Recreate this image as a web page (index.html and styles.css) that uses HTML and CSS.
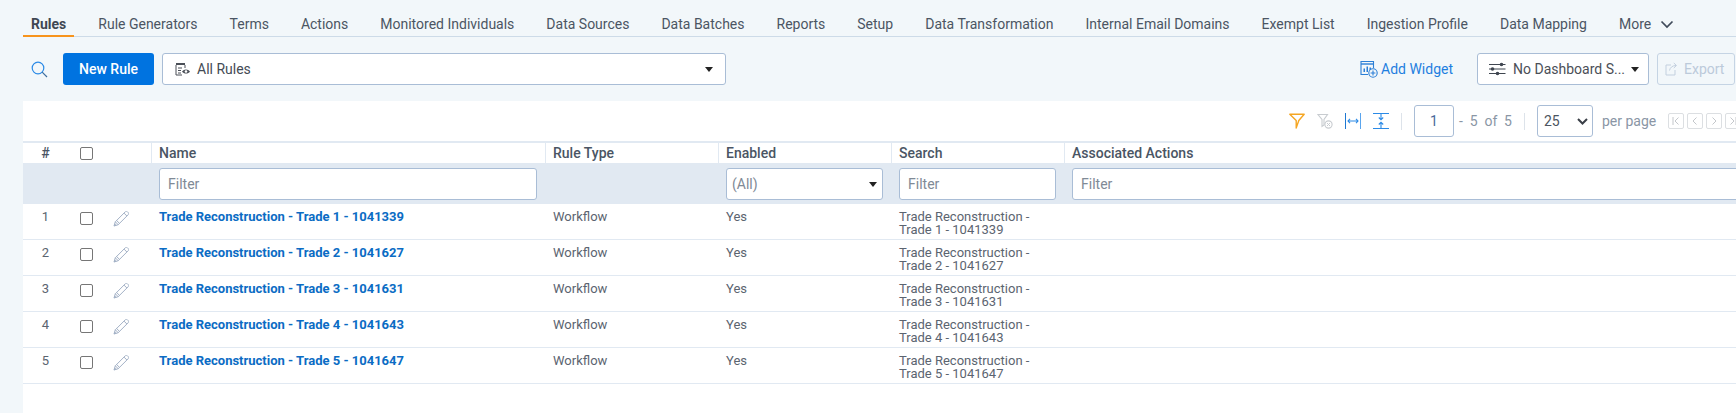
FILE: index.html
```html
<!DOCTYPE html>
<html lang="en">
<head>
  <meta charset="UTF-8" />
  <title>Rules</title>
  <link rel="stylesheet" href="styles.css">
</head>
<body>
  <svg class="sprite" aria-hidden="true">
    <symbol id="pencil" viewBox="0 0 16 16">
      <path d="M12.4.7C13 .2 13.7.2 14.3.7L15.3 1.7C15.8 2.3 15.8 3 15.3 3.6L5.2 13.7 1 15 2.3 10.8Z" fill="none" stroke="#a3b1c6" stroke-width="1"/>
      <path d="M2.3 10.8 5.2 13.7M11 2.1 13.9 5M3.6 9.5 6.5 12.4" fill="none" stroke="#a3b1c6" stroke-width="1"/>
      <path d="M.8 15.2 1.7 12.4 3.6 14.3Z" fill="#a3b1c6"/>
    </symbol>
  </svg>

  <nav class="tabs">
    <a class="tab active">Rules</a>
    <a class="tab">Rule Generators</a>
    <a class="tab">Terms</a>
    <a class="tab">Actions</a>
    <a class="tab">Monitored Individuals</a>
    <a class="tab">Data Sources</a>
    <a class="tab">Data Batches</a>
    <a class="tab">Reports</a>
    <a class="tab">Setup</a>
    <a class="tab">Data Transformation</a>
    <a class="tab">Internal Email Domains</a>
    <a class="tab">Exempt List</a>
    <a class="tab">Ingestion Profile</a>
    <a class="tab">Data Mapping</a>
    <a class="tab">More
      <svg class="more-chevron" width="14" height="9" viewBox="0 0 14 9"><path d="M1.5 1.5 7 7 12.5 1.5" fill="none" stroke="#3f4a5a" stroke-width="1.7"/></svg>
    </a>
  </nav>

  <div class="toolbar">
    <svg class="search-icon" width="17" height="17" viewBox="0 0 17 17"><circle cx="7" cy="7" r="5.8" fill="none" stroke="#2b8ae6" stroke-width="1.2"/><path d="M11.2 11.2 16 16" stroke="#3f6f9f" stroke-width="1.2"/></svg>
    <button class="btn-primary">New Rule</button>
    <div class="view-select">
      <svg width="16" height="14" viewBox="0 0 16 14"><path d="M1 1H10V3H1Z" fill="#4a4f57"/><path d="M1 3V13H7M10 3V6M3 6H7M3 8.5H6M3 11H6" fill="none" stroke="#4a4f57" stroke-width="1"/><path d="M7 9.5C9 6.8 13 6.8 15 9.5 13 12.2 9 12.2 7 9.5Z" fill="#4a4f57"/><circle cx="11" cy="9.5" r="1.3" fill="#fff"/></svg>
      <span class="view-name">All Rules</span>
      <span class="caret"></span>
    </div>
    <a class="add-widget">
      <svg width="18" height="18" viewBox="0 0 18 18"><path d="M13.5 8V1.5H1V14.5H8" fill="none" stroke="#2b7fd6" stroke-width="1.1"/><path d="M1 4H13.5" stroke="#2b7fd6" stroke-width="1.4"/><path d="M3.5 12V8.5H5V12ZM6.5 12V6.5H8V12ZM9.5 10V7.5H11V10Z" fill="#2b7fd6"/><circle cx="13" cy="13" r="4.2" fill="#f2f7fa" stroke="#2b7fd6" stroke-width="1.1"/><path d="M13 10.6V15.4M10.6 13H15.4" stroke="#2b7fd6" stroke-width="1.1"/></svg>
      Add Widget
    </a>
    <div class="dash-select">
      <svg width="17" height="14" viewBox="0 0 17 14"><path d="M0 2.5H16.5M0 7H16.5M0 11.5H16.5" stroke="#3f4650" stroke-width="1"/><circle cx="12.5" cy="2.5" r="1.8" fill="#3f4650"/><circle cx="3.5" cy="7" r="1.8" fill="#3f4650"/><circle cx="8.5" cy="11.5" r="1.8" fill="#3f4650"/></svg>
      <span class="dash-name">No Dashboard S...</span>
      <span class="caret"></span>
    </div>
    <button class="btn-export">
      <svg width="13" height="14" viewBox="0 0 13 14"><path d="M6 3H1V13H10V8" fill="none" stroke="#c3d0df" stroke-width="1"/><path d="M4.5 8.5C5 5.5 7.5 3.5 11 3.5M8.8 1 11.5 3.5 8.8 6" fill="none" stroke="#c3d0df" stroke-width="1"/></svg>
      Export
    </button>
  </div>

  <main class="panel">
    <div class="grid-tools">
      <svg class="tool" width="16" height="16" viewBox="0 0 16 16"><path d="M.8 1.2H15.2L9.8 7.5 7.2 15V7.5Z" fill="none" stroke="#f5a623" stroke-width="1.4" stroke-linejoin="round"/></svg>
      <svg class="tool" width="16" height="16" viewBox="0 0 16 16"><path d="M1 1.5H10.5L7 6.5V12L5 13.5V6.5Z" fill="none" stroke="#c8ccd0" stroke-width="1.1"/><circle cx="11.5" cy="11.5" r="3.6" fill="none" stroke="#c8ccd0" stroke-width="1.1"/><path d="M10 10 13 13M13 10 10 13" stroke="#c8ccd0" stroke-width="1"/></svg>
      <svg class="tool" width="16" height="16" viewBox="0 0 16 16"><path d="M.5 0V16" stroke="#1e78d2"/><path d="M15.5 0V16" stroke="#5aa5ee"/><path d="M3 8H13M5 5.8 3 8 5 10.2M11 5.8 13 8 11 10.2" fill="none" stroke="#2b8ae6" stroke-width="1.1"/></svg>
      <svg class="tool" width="16" height="16" viewBox="0 0 16 16"><path d="M0 .5H16M0 15.5H16" stroke="#2b8ae6"/><path d="M8 1V6.5M5.8 4.5 8 6.8 10.2 4.5M8 9.5V15M5.8 11.5 8 9.2 10.2 11.5" fill="none" stroke="#2b8ae6" stroke-width="1.1"/></svg>
      <span class="divider"></span>
      <input class="page-input" value="1" />
      <span class="page-range"><span>-</span><span>5</span><span>of</span><span>5</span></span>
      <span class="divider"></span>
      <div class="size-select">25
        <svg width="11" height="7" viewBox="0 0 11 7"><path d="M1 1 5.5 5.5 10 1" fill="none" stroke="#3a3f47" stroke-width="2"/></svg>
      </div>
      <span class="per-page">per page</span>
      <div class="pager">
        <span class="page-btn"><svg width="8" height="8" viewBox="0 0 8 8"><path d="M1 0V8M6.5 .5 3 4 6.5 7.5" fill="none" stroke="#c4c7cb"/></svg></span>
        <span class="page-btn"><svg width="8" height="8" viewBox="0 0 8 8"><path d="M5.5 .5 2 4 5.5 7.5" fill="none" stroke="#c4c7cb"/></svg></span>
        <span class="page-btn"><svg width="8" height="8" viewBox="0 0 8 8"><path d="M2.5 .5 6 4 2.5 7.5" fill="none" stroke="#c4c7cb"/></svg></span>
        <span class="page-btn"><svg width="8" height="8" viewBox="0 0 8 8"><path d="M7 0V8M1.5 .5 5 4 1.5 7.5" fill="none" stroke="#c4c7cb"/></svg></span>
      </div>
    </div>

    <table class="rules">
      <colgroup>
        <col class="c-num"><col class="c-check"><col class="c-edit"><col class="c-name"><col class="c-mid"><col class="c-mid"><col class="c-mid"><col class="c-actions">
      </colgroup>
      <thead>
        <tr class="head-row">
          <th class="num">#</th>
          <th class="check"><span class="box"></span></th>
          <th></th>
          <th class="sep">Name</th>
          <th class="sep">Rule Type</th>
          <th class="sep">Enabled</th>
          <th class="sep">Search</th>
          <th class="sep">Associated Actions</th>
        </tr>
        <tr class="filter-row">
          <td></td><td></td><td></td>
          <td><input class="filter" placeholder="Filter" /></td>
          <td></td>
          <td><div class="filter filter-select">(All)<span class="caret"></span></div></td>
          <td><input class="filter" placeholder="Filter" /></td>
          <td><input class="filter" placeholder="Filter" /></td>
        </tr>
      </thead>
      <tbody>
        <tr>
          <td class="num">1</td><td class="check"><span class="box"></span></td><td class="edit"><svg width="16" height="16"><use href="#pencil"/></svg></td>
          <td><a class="rule-link">Trade Reconstruction - Trade 1 - 1041339</a></td><td>Workflow</td><td>Yes</td>
          <td>Trade Reconstruction -<br>Trade 1 - 1041339</td><td></td>
        </tr>
        <tr>
          <td class="num">2</td><td class="check"><span class="box"></span></td><td class="edit"><svg width="16" height="16"><use href="#pencil"/></svg></td>
          <td><a class="rule-link">Trade Reconstruction - Trade 2 - 1041627</a></td><td>Workflow</td><td>Yes</td>
          <td>Trade Reconstruction -<br>Trade 2 - 1041627</td><td></td>
        </tr>
        <tr>
          <td class="num">3</td><td class="check"><span class="box"></span></td><td class="edit"><svg width="16" height="16"><use href="#pencil"/></svg></td>
          <td><a class="rule-link">Trade Reconstruction - Trade 3 - 1041631</a></td><td>Workflow</td><td>Yes</td>
          <td>Trade Reconstruction -<br>Trade 3 - 1041631</td><td></td>
        </tr>
        <tr>
          <td class="num">4</td><td class="check"><span class="box"></span></td><td class="edit"><svg width="16" height="16"><use href="#pencil"/></svg></td>
          <td><a class="rule-link">Trade Reconstruction - Trade 4 - 1041643</a></td><td>Workflow</td><td>Yes</td>
          <td>Trade Reconstruction -<br>Trade 4 - 1041643</td><td></td>
        </tr>
        <tr>
          <td class="num">5</td><td class="check"><span class="box"></span></td><td class="edit"><svg width="16" height="16"><use href="#pencil"/></svg></td>
          <td><a class="rule-link">Trade Reconstruction - Trade 5 - 1041647</a></td><td>Workflow</td><td>Yes</td>
          <td>Trade Reconstruction -<br>Trade 5 - 1041647</td><td></td>
        </tr>
      </tbody>
    </table>
  </main>
</body>
</html>
```

FILE: styles.css
```css
:root {
  --background: #f2f7fa;
  --line: #e1e9f2;
  --field-border: #a9bdd6;
  --text: #4c5561;
  --blue: #0073e0;
  --link: #0b6cc4;
}

* {
  box-sizing: border-box;
}

html, body {
  height: 100%;
}

body {
  margin: 0;
  padding-left: 23px;
  overflow: hidden;
  display: flex;
  flex-direction: column;
  background-color: var(--background);
  color: var(--text);
  font-family: Roboto, sans-serif;
  font-size: 14px;
}

.sprite {
  display: none;
}

svg {
  flex: none;
}

/* tabs */
.tabs {
  display: flex;
  gap: 16px;
  height: 37px;
  padding-top: 15px;
  border-bottom: 1px solid #cddbe8;
  white-space: nowrap;
}

.tab {
  display: flex;
  align-items: flex-start;
  padding: 0 8px;
  height: 22px;
  line-height: 18px;
  color: #4b5563;
}

.tab.active {
  font-weight: 700;
  color: #3f4752;
  border-bottom: 2px solid #f7941d;
}

.more-chevron {
  margin: 5px 0 0 9px;
}

/* toolbar */
.toolbar {
  display: flex;
  align-items: center;
  height: 64px;
  flex: none;
}

.search-icon {
  margin: 0 15px 0 8px;
}

.btn-primary {
  width: 91px;
  height: 32px;
  margin-right: 8px;
  border: none;
  border-radius: 3px;
  background-color: var(--blue);
  color: #fff;
  font: 500 14px Roboto, sans-serif;
}

.view-select, .dash-select {
  display: flex;
  align-items: center;
  height: 32px;
  border: 1px solid var(--field-border);
  border-radius: 3px;
  background-color: #fff;
  color: #444b55;
}

.view-select {
  width: 564px;
  padding: 0 12px;
}

.view-name {
  margin-left: 6px;
}

.view-select .caret {
  margin-left: auto;
}

.caret {
  width: 0;
  height: 0;
  border-left: 4px solid transparent;
  border-right: 4px solid transparent;
  border-top: 5px solid #222;
}

.add-widget {
  display: flex;
  align-items: center;
  gap: 3px;
  margin-left: auto;
  margin-right: 24px;
  color: #1f7fe0;
}

.dash-select {
  width: 172px;
  padding: 0 11px;
  margin-right: 8px;
  white-space: nowrap;
}

.dash-name {
  margin: 0 6px 0 7px;
  color: #4b4f57;
}

.btn-export {
  display: flex;
  align-items: center;
  gap: 6px;
  width: 78px;
  height: 32px;
  margin-right: 1px;
  padding: 0 7px;
  border: 1px solid #c5d4e4;
  border-radius: 3px;
  background: transparent;
  color: #bccada;
  font: 14px Roboto, sans-serif;
}

/* white area */
.panel {
  flex: 1;
  background-color: #fff;
}

.grid-tools {
  display: flex;
  align-items: center;
  justify-content: flex-end;
  height: 40px;
  margin-right: -5px;
  color: #8a96a5;
}

.tool {
  margin-right: 12px;
}

.divider {
  width: 1px;
  height: 17px;
  margin-right: 12px;
  background-color: #dde3ea;
}

.page-input {
  width: 40px;
  height: 32px;
  border: 1px solid var(--field-border);
  border-radius: 3px;
  text-align: center;
  color: #4a6a9a;
  font: 14px Roboto, sans-serif;
}

.page-range {
  display: flex;
  justify-content: space-between;
  width: 53px;
  margin: 0 12px 0 5px;
  white-space: nowrap;
}

.size-select {
  display: flex;
  align-items: center;
  justify-content: space-between;
  width: 56px;
  height: 32px;
  padding: 0 4px 0 6px;
  border: 1px solid var(--field-border);
  border-radius: 3px;
  color: #4c5561;
}

.per-page {
  width: 54px;
  margin: 0 12px 0 9px;
  white-space: nowrap;
}

.pager {
  display: flex;
  gap: 3px;
}

.page-btn {
  display: flex;
  align-items: center;
  justify-content: center;
  width: 16px;
  height: 16px;
  border: 1px solid #dcdfe2;
  border-radius: 2px;
}

/* table */
.rules {
  table-layout: fixed;
  width: 1800px;
  border-collapse: separate;
  border-spacing: 0;
  font-size: 13px;
  line-height: 13px;
}

.c-num { width: 45px; }
.c-check { width: 36px; }
.c-edit { width: 47px; }
.c-name { width: 394px; }
.c-mid { width: 173px; }
.c-actions { width: 759px; }

.head-row {
  height: 22px;
}

.head-row th {
  padding: 0 8px;
  border-top: 2px solid var(--line);
  text-align: left;
  font-size: 14px;
  font-weight: 500;
  color: #4a5564;
}

.head-row .sep {
  padding-left: 7px;
  border-left: 1px solid var(--line);
}

.filter-row {
  height: 41px;
  background-color: var(--line);
}

.filter-row td {
  padding: 5px 8px 4px;
}

.filter {
  display: block;
  width: 100%;
  height: 32px;
  padding: 0 8px;
  border: 1px solid var(--field-border);
  border-radius: 3px;
  background-color: #fff;
  font: 14px Roboto, sans-serif;
}

.filter::placeholder {
  color: #808a96;
  opacity: 1;
}

.filter-select {
  display: flex;
  align-items: center;
  justify-content: space-between;
  padding: 0 5px;
  color: #808a96;
}

tbody tr {
  height: 36px;
}

tbody td {
  height: 36px;
  padding: 6px 8px 0;
  border-bottom: 1px solid var(--line);
  vertical-align: top;
  overflow: hidden;
  color: #5b6470;
}

.rule-link {
  color: var(--link);
  font-weight: 700;
}

th.num, td.num {
  text-align: center;
  padding-left: 0;
  padding-right: 0;
}

th.check, td.check {
  padding: 0;
}

td.check {
  padding-top: 8px;
}

.box {
  display: block;
  width: 13px;
  height: 13px;
  margin-left: 12px;
  border: 1px solid #767676;
  border-radius: 2px;
  background-color: #fff;
}

td.edit {
  padding: 7px 0 0 9px;
}

td.edit svg {
  display: block;
}
```
